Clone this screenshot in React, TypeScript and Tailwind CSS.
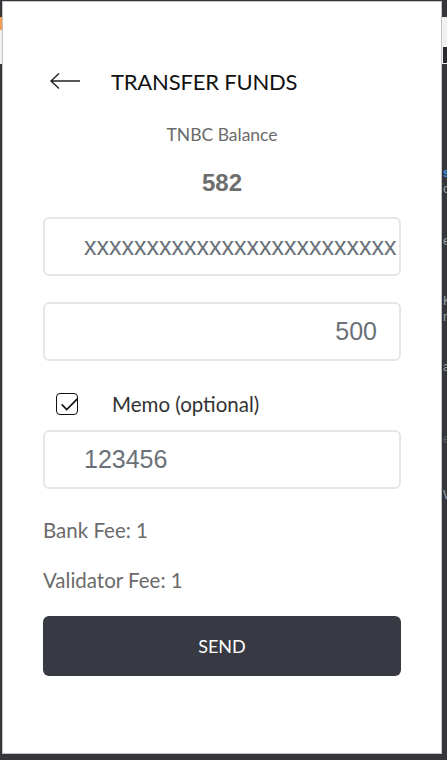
const futura = { fontFamily: 'Lato, "Noto Sans", sans-serif' };

function Field({ value, align = 'left' }: { value: string; align?: 'left' | 'right' }) {
  return (
    <div className="h-[59px] w-full overflow-hidden rounded-[6px] border-2 border-[#e6e6e6] bg-white">
      <div
        className={
          align === 'right'
            ? 'flex h-full items-center justify-end whitespace-nowrap pr-[22px] text-[25px] text-[#6b7178]'
            : 'flex h-full items-center whitespace-nowrap pl-[39px] text-[25px] text-[#6b7178]'
        }
        style={{ fontFamily: '"Liberation Sans", Arial, sans-serif' }}
      >
        {value}
      </div>
    </div>
  );
}

function BackdropPage() {
  // the page behind the popup, only a sliver shows on the right
  return (
    <div
      className="absolute left-[443px] top-[47px] flex w-[20px] flex-col overflow-hidden text-[13px] leading-[16px] text-[#9aa0a6]"
      style={{ fontFamily: '"Liberation Sans", sans-serif' }}
    >
      <div className="h-[16px] bg-[#2a2b30]" />
      <div className="mt-[102px] font-bold text-[#3b9be8]">s</div>
      <div>c</div>
      <div className="mt-[36px]">e</div>
      <div className="mt-[44px]">K</div>
      <div>n</div>
      <div className="mt-[34px]">a</div>
      <div className="mt-[56px] text-[#5c6066]">e</div>
      <div className="mt-[40px]">W</div>
    </div>
  );
}

export default function App() {
  return (
    <div className="relative h-[760px] w-[447px] overflow-hidden bg-[#35363b]">
      <div className="h-[47px] bg-[#f1f1f1]">
        <div className="mt-[17px] h-[13px] w-[3px] bg-[#f0a050]" />
      </div>
      <BackdropPage />

      <div className="absolute left-[2px] top-[1px] h-[753px] w-[440px] border border-[#c4c4c4] bg-white px-10 pt-[65px]">
        <div className="flex h-[28px] items-center" style={futura}>
          <svg viewBox="0 0 32 18" className="ml-[6px] h-[18px] w-[32px]" fill="none" stroke="#222" strokeWidth="1.4">
            <path d="M31 9 H2 M10 1.5 L2 9 L10 16.5" />
          </svg>
          <h1 className="ml-[30px] text-[22px] tracking-[-0.2px] text-[#111]">TRANSFER FUNDS</h1>
        </div>

        <p className="mt-[30px] text-center text-[17.5px] leading-[20px] text-[#6b6b6b]" style={futura}>
          TNBC Balance
        </p>
        <p
          className="mt-[26px] text-center text-[24px] font-bold leading-[24px] text-[#6e6e6e]"
          style={{ fontFamily: '"Liberation Sans", Arial, sans-serif' }}
        >
          582
        </p>

        <div className="mt-[22px]">
          <Field value="xxxxxxxxxxxxxxxxxxxxxxxxx" />
        </div>
        <div className="mt-[26px]">
          <Field value="500" align="right" />
        </div>

        <label className="mt-[31px] flex h-[24px] items-center" style={futura}>
          <span className="relative ml-[13px] h-[22px] w-[22px] rounded-[4px] border-[1.5px] border-[#111]">
            <svg viewBox="0 0 24 24" className="absolute -right-[3px] -top-[1px] h-[22px] w-[22px]" fill="none" stroke="#111" strokeWidth="1.8">
              <path d="M4 12.5 L9.5 18 L21 6.5" />
            </svg>
          </span>
          <span className="ml-[34px] text-[20.5px] text-[#333]">Memo (optional)</span>
        </label>

        <div className="mt-[14px]">
          <Field value="123456" />
        </div>

        <p className="mt-[29px] text-[20.5px] leading-[24px] text-[#6b6b6b]" style={futura}>
          Bank Fee: 1
        </p>
        <p className="mt-[26px] text-[20.5px] leading-[24px] text-[#6b6b6b]" style={futura}>
          Validator Fee: 1
        </p>

        <button
          className="mt-[24px] flex h-[60px] w-full items-center justify-center rounded-[6px] bg-[#373a42] text-[18px] text-white"
          style={futura}
        >
          SEND
        </button>
      </div>
    </div>
  );
}
